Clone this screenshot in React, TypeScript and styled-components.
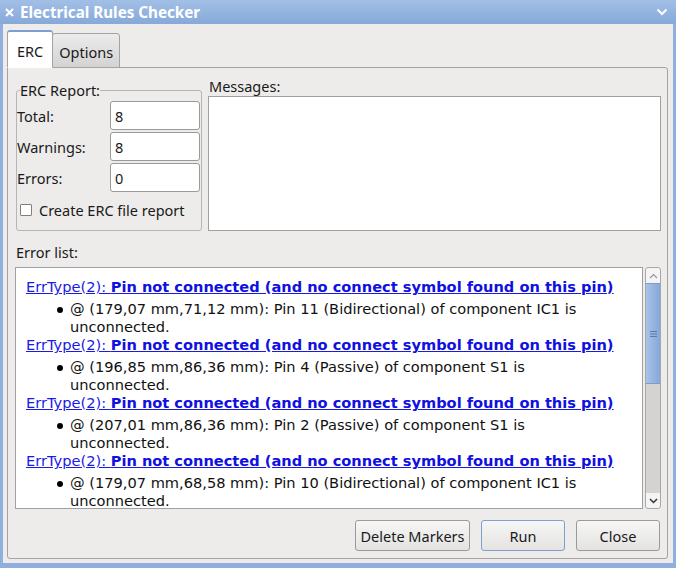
import React from "react";
import styled, { createGlobalStyle } from "styled-components";

const GlobalStyle = createGlobalStyle`
  html, body {
    margin: 0;
    padding: 0;
    background: #8fb0dc;
  }
  body {
    font-family: "Noto Sans", "DejaVu Sans", sans-serif;
    font-size: 14.5px;
    color: #1a1a1a;
  }
`;

const Window = styled.div`
  width: 676px;
  height: 568px;
  box-sizing: border-box;
  display: flex;
  flex-direction: column;
  background: #8fb0dc;
  padding: 0 3px 5px 3px;
`;

const TitleBar = styled.div`
  height: 24px;
  margin: 0 -3px;
  padding: 0 8px 0 5px;
  display: flex;
  align-items: center;
  gap: 6px;
  background: linear-gradient(#a2bfe6, #86a9d9);
  color: #ffffff;
  font-weight: bold;
  font-size: 15.2px;
`;

const TitleText = styled.span`
  flex: 1;
`;

const Body = styled.div`
  flex: 1;
  background: #edecea;
  padding: 6px 5px 4px 4px;
  display: flex;
  flex-direction: column;
`;

const TabRow = styled.div`
  display: flex;
  align-items: flex-end;
  height: 38px;
  position: relative;
  z-index: 1;
  margin-bottom: -1px;
`;

const Tab = styled.div<{ active?: boolean }>`
  box-sizing: border-box;
  height: ${(p) => (p.active ? "38px" : "35px")};
  padding: 2px ${(p) => (p.active ? "9px" : "6px")} 0;
  display: flex;
  align-items: center;
  border: 1px solid #a3a3a3;
  border-bottom: ${(p) => (p.active ? "1px solid #ffffff" : "1px solid #a3a3a3")};
  border-top: ${(p) => (p.active ? "2px solid #7b9fd0" : "1px solid #a3a3a3")};
  border-radius: 3px 3px 0 0;
  background: ${(p) =>
    p.active ? "#ffffff" : "linear-gradient(#ececec, #d3d3d3)"};
  margin-left: ${(p) => (p.active ? "0" : "-1px")};
`;

const Pane = styled.div`
  flex: 1;
  border: 1px solid #a3a3a3;
  border-radius: 0 3px 3px 3px;
  padding: 9px 6px 7px 8px;
  display: flex;
  flex-direction: column;
`;

const TopRow = styled.div`
  display: flex;
  gap: 6px;
  height: 154px;
`;

const Group = styled.fieldset`
  margin: 4px 0 0 0;
  width: 186px;
  box-sizing: border-box;
  border: 1px solid #b5b5b5;
  border-radius: 3px;
  padding: 0 1px 0 0;
  display: flex;
  flex-direction: column;
  gap: 2px;
`;

const Legend = styled.legend`
  padding: 0;
  margin-left: 3px;
  line-height: 18px;
  margin-bottom: 2px;
`;

const FieldRow = styled.div`
  display: flex;
  align-items: center;
  justify-content: space-between;
`;

const FieldLabel = styled.span``;

const NumberBox = styled.div`
  box-sizing: border-box;
  width: 90px;
  height: 29px;
  background: #ffffff;
  border: 1px solid #9a9a9a;
  border-radius: 3px;
  padding: 0 4px;
  display: flex;
  align-items: center;
`;

const CheckRow = styled.label`
  display: flex;
  align-items: center;
  gap: 7px;
  margin-top: 6px;
  padding-left: 3px;
`;

const CheckBox = styled.span`
  box-sizing: border-box;
  width: 12px;
  height: 12px;
  border: 1px solid #808080;
  border-radius: 1px;
  background: #ffffff;
`;

const MessagesCol = styled.div`
  flex: 1;
  display: flex;
  flex-direction: column;
`;

const Caption = styled.div`
  line-height: 18px;
  margin-left: 1px;
`;

const TextArea = styled.div`
  flex: 1;
  background: #ffffff;
  border: 1px solid #a0a0a0;
  margin-top: 1px;
`;

const ListLabel = styled.div`
  line-height: 18px;
  margin-top: 12px;
`;

const ListWrap = styled.div`
  display: flex;
  height: 242px;
  margin: 6px 0 0 -1px;
  gap: 2px;
`;

const List = styled.div`
  flex: 1;
  background: #ffffff;
  border: 1px solid #a0a0a0;
  overflow: hidden;
  padding: 10px 0 0 10px;
  font-family: "DejaVu Sans", sans-serif;
  font-size: 14.6px;
  line-height: 18px;
  color: #111;
`;

const ErrItem = styled.div``;

const ErrLink = styled.a`
  color: #1a1ae6;
  text-decoration: underline;
  display: inline-block;
`;

const ErrBold = styled.b`
  color: #1010e0;
`;

const Detail = styled.div`
  display: flex;
  padding-left: 31px;
  margin-top: 4px;
`;

const DetailText = styled.span`
  max-width: 530px;
`;

const Bullet = styled.span`
  width: 6px;
  height: 6px;
  border-radius: 50%;
  background: #000;
  margin-top: 7px;
  margin-right: 7px;
  flex-shrink: 0;
`;

const ScrollBar = styled.div`
  box-sizing: border-box;
  width: 16px;
  display: flex;
  flex-direction: column;
  border: 1px solid #a8a8a8;
  border-radius: 3px;
  background: #d4d3d1;
  overflow: hidden;
`;

const ScrollBtn = styled.div`
  height: 15px;
  background: #f4f4f4;
  display: flex;
  align-items: center;
  justify-content: center;
`;

const Thumb = styled.div`
  height: 99px;
  background: linear-gradient(90deg, #a9c3e8, #85a8d9);
  border-top: 1px solid #7d9ccc;
  border-bottom: 1px solid #7d9ccc;
  display: flex;
  align-items: center;
  justify-content: center;
`;

const Trough = styled.div`
  flex: 1;
`;

const Buttons = styled.div`
  display: flex;
  justify-content: flex-end;
  gap: 11px;
  margin-top: 11px;
  padding-right: 1px;
`;

const Button = styled.div<{ w: number; focused?: boolean }>`
  box-sizing: border-box;
  width: ${(p) => p.w}px;
  height: 31px;
  display: flex;
  align-items: center;
  justify-content: center;
  border: 1px solid ${(p) => (p.focused ? "#7f9fcf" : "#9a9a9a")};
  border-radius: 3px;
  background: linear-gradient(#f6f6f6, #e4e3e1);
`;

const errors = [
  "@ (179,07 mm,71,12 mm): Pin 11 (Bidirectional) of component IC1 is unconnected.",
  "@ (196,85 mm,86,36 mm): Pin 4 (Passive) of component S1 is unconnected.",
  "@ (207,01 mm,86,36 mm): Pin 2 (Passive) of component S1 is unconnected.",
  "@ (179,07 mm,68,58 mm): Pin 10 (Bidirectional) of component IC1 is unconnected.",
];

export default function App() {
  return (
    <>
      <GlobalStyle />
      <Window>
        <TitleBar>
          <svg width="9" height="9" viewBox="0 0 9 9">
            <path d="M1 1L8 8M8 1L1 8" stroke="#fff" strokeWidth="2" />
          </svg>
          <TitleText>Electrical Rules Checker</TitleText>
          <svg width="12" height="8" viewBox="0 0 12 8">
            <path d="M1.5 1.5L6 6L10.5 1.5" stroke="#fff" strokeWidth="2" fill="none" />
          </svg>
        </TitleBar>
        <Body>
          <TabRow>
            <Tab active>ERC</Tab>
            <Tab>Options</Tab>
          </TabRow>
          <Pane>
            <TopRow>
              <Group>
                <Legend>ERC Report:</Legend>
                <FieldRow>
                  <FieldLabel>Total:</FieldLabel>
                  <NumberBox>8</NumberBox>
                </FieldRow>
                <FieldRow>
                  <FieldLabel>Warnings:</FieldLabel>
                  <NumberBox>8</NumberBox>
                </FieldRow>
                <FieldRow>
                  <FieldLabel>Errors:</FieldLabel>
                  <NumberBox>0</NumberBox>
                </FieldRow>
                <CheckRow>
                  <CheckBox />
                  Create ERC file report
                </CheckRow>
              </Group>
              <MessagesCol>
                <Caption>Messages:</Caption>
                <TextArea />
              </MessagesCol>
            </TopRow>
            <ListLabel>Error list:</ListLabel>
            <ListWrap>
              <List>
                {errors.map((e, i) => (
                  <ErrItem key={i}>
                    <ErrLink>
                      ErrType(2): <ErrBold>Pin not connected (and no connect symbol found on this pin)</ErrBold>
                    </ErrLink>
                    <Detail>
                      <Bullet />
                      <DetailText>{e}</DetailText>
                    </Detail>
                  </ErrItem>
                ))}
              </List>
              <ScrollBar>
                <ScrollBtn>
                  <svg width="9" height="6" viewBox="0 0 9 6">
                    <path d="M1 5L4.5 1.5L8 5" stroke="#9a9a9a" strokeWidth="1.2" fill="none" />
                  </svg>
                </ScrollBtn>
                <Thumb>
                  <svg width="7" height="8" viewBox="0 0 7 8">
                    <path d="M0 1.5H7M0 4H7M0 6.5H7" stroke="#5a7ab0" strokeWidth="1" />
                  </svg>
                </Thumb>
                <Trough />
                <ScrollBtn>
                  <svg width="9" height="6" viewBox="0 0 9 6">
                    <path d="M1 1L4.5 4.5L8 1" stroke="#333" strokeWidth="1.5" fill="none" />
                  </svg>
                </ScrollBtn>
              </ScrollBar>
            </ListWrap>
            <Buttons>
              <Button w={115}>Delete Markers</Button>
              <Button w={84} focused>Run</Button>
              <Button w={84}>Close</Button>
            </Buttons>
          </Pane>
        </Body>
      </Window>
    </>
  );
}
